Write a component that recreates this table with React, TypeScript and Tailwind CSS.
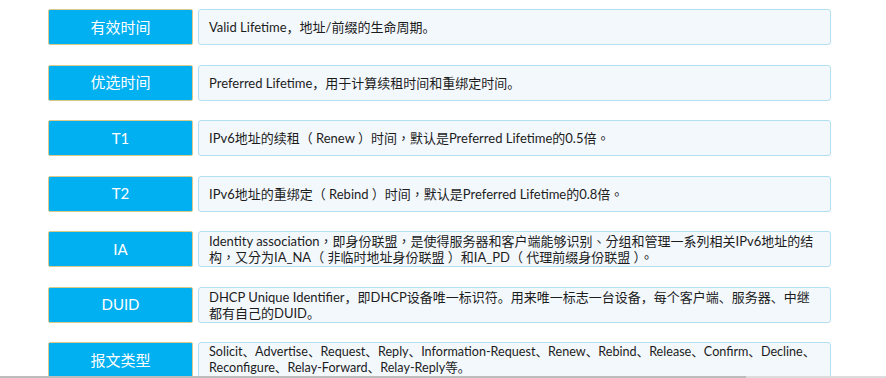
const rows: { label: string; lines: string[]; tc?: boolean; small?: boolean }[] = [
  { label: "有效时间", lines: ["Valid Lifetime，地址/前缀的生命周期。"] },
  { label: "优选时间", lines: ["Preferred Lifetime，用于计算续租时间和重绑定时间。"] },
  { label: "T1", tc: true, lines: ["IPv6地址的续租（ Renew ）时间，默认是Preferred Lifetime的0.5倍。"] },
  { label: "T2", tc: true, lines: ["IPv6地址的重绑定（ Rebind ）时间，默认是Preferred Lifetime的0.8倍。"] },
  {
    label: "IA",
    tc: true,
    lines: [
      "Identity association，即身份联盟，是使得服务器和客户端能够识别、分组和管理一系列相关IPv6地址的结",
      "构，又分为IA_NA（ 非临时地址身份联盟 ）和IA_PD（ 代理前缀身份联盟 ）。",
    ],
  },
  {
    label: "DUID",
    lines: [
      "DHCP Unique Identifier，即DHCP设备唯一标识符。用来唯一标志一台设备，每个客户端、服务器、中继",
      "都有自己的DUID。",
    ],
  },
  {
    label: "报文类型",
    small: true,
    lines: [
      "Solicit、Advertise、Request、Reply、Information-Request、Renew、Rebind、Release、Confirm、Decline、",
      "Reconfigure、Relay-Forward、Relay-Reply等。",
    ],
  },
];

export default function App() {
  return (
    <div
      className="relative h-[378px] w-[886px] overflow-hidden bg-white"
      style={{ fontFamily: 'Lato, "Noto Sans CJK SC", sans-serif' }}
    >
      {/* Term rows */}
      <div className="flex flex-col gap-[19.5px] pl-[48px] pt-[9px]">
        {rows.map((row) => (
          <div key={row.label} className="flex h-[36px] gap-[5px]">
            <div className="flex w-[145px] shrink-0 items-center justify-center rounded-[2px] border border-[#d9c98a] bg-[#00b0f0] text-[15px] text-white">
              {row.label}
            </div>
            <div
              className={
                row.tc
                  ? "flex w-[633px] flex-col justify-center rounded-[3px] border border-[#b3dff2] bg-[#f3f8fd] pl-[10px] font-['Lato','Noto_Sans_CJK_TC',sans-serif] text-[13px] leading-[16px] text-[#1c1c1c]"
                  : row.small
                    ? "flex w-[633px] flex-col justify-center rounded-[3px] border border-[#b3dff2] bg-[#f3f8fd] pl-[10px] text-[12.6px] leading-[16px] text-[#1c1c1c]"
                    : "flex w-[633px] flex-col justify-center rounded-[3px] border border-[#b3dff2] bg-[#f3f8fd] pl-[10px] text-[13px] leading-[16px] text-[#1c1c1c]"
              }
            >
              {row.lines.map((line) => (
                <div key={line} className="whitespace-nowrap">
                  {line}
                </div>
              ))}
            </div>
          </div>
        ))}
      </div>

      {/* Horizontal scrollbar */}
      <div className="absolute bottom-0 left-0 flex h-[2px] w-full bg-[#dcdcdc]">
        <div className="h-full w-[746px] bg-[#bcbcbc]" />
      </div>
    </div>
  );
}
